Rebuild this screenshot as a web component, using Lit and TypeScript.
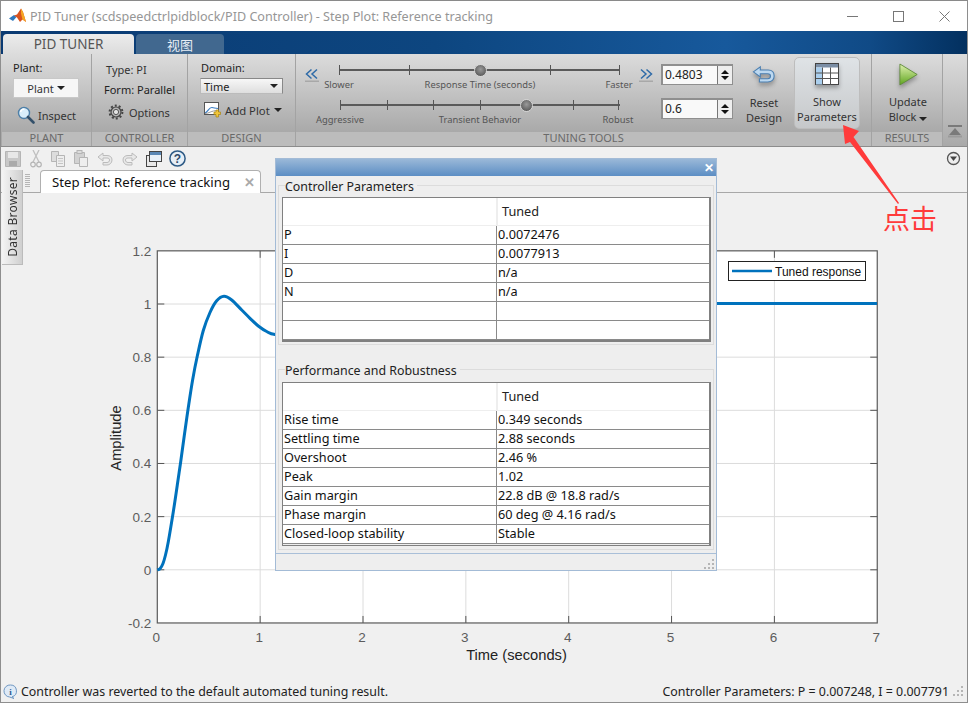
import { LitElement, html, css, svg } from "lit";
import { customElement } from "lit/decorators.js";

const curvePts: [number, number][] = [
  [157.3, 570], [160, 568.8], [163, 563.5], [165.5, 555], [168.3, 541.7], [173.3, 511.7], [177.3, 485], [180.7, 461.7],
  [184.3, 435.5], [188.3, 407.5], [192.7, 379.5], [197.3, 356], [203.3, 330.5], [210, 312.5],
  [216.7, 300.8], [224, 296.2], [231.7, 300], [241.7, 310], [250, 318.3], [258.3, 326],
  [266.7, 331.5], [275, 334.5], [300, 336], [400, 318], [500, 308], [600, 304.5], [700, 303.5], [877, 303.5],
];

function smooth(p: [number, number][]) {
  let d = `M${p[0][0]} ${p[0][1]}`;
  for (let i = 0; i < p.length - 1; i++) {
    const a = p[Math.max(0, i - 1)], b = p[i], c = p[i + 1], e = p[Math.min(p.length - 1, i + 2)];
    const c1 = [b[0] + (c[0] - a[0]) / 6, b[1] + (c[1] - a[1]) / 6];
    const c2 = [c[0] - (e[0] - b[0]) / 6, c[1] - (e[1] - b[1]) / 6];
    d += `C${c1[0].toFixed(1)} ${c1[1].toFixed(1)} ${c2[0].toFixed(1)} ${c2[1].toFixed(1)} ${c[0]} ${c[1]}`;
  }
  return d;
}

const X0 = 157.3, XU = 102.85, YZ = 569.8, YU = 265.8;
const xs = [0, 1, 2, 3, 4, 5, 6, 7];
const ys = [-0.2, 0, 0.2, 0.4, 0.6, 0.8, 1, 1.2];
const px = (t: number) => X0 + t * XU;
const py = (v: number) => YZ - v * YU;

function plot() {
  const L = px(0), R = px(7), T = py(1.2), B = py(-0.2);
  return html`<svg class="plot" viewBox="1 193 966 487" width="966" height="487">
    <rect x=${L} y=${T} width=${R - L} height=${B - T} fill="#fff"></rect>
    ${xs.slice(1, 7).map((t) => svg`<line x1=${px(t)} x2=${px(t)} y1=${T} y2=${B} stroke="#dcdcdc"></line>
      <line x1=${px(t)} x2=${px(t)} y1=${T} y2=${T + 7} stroke="#555"></line>
      <line x1=${px(t)} x2=${px(t)} y1=${B} y2=${B - 7} stroke="#555"></line>`)}
    ${ys.slice(1, 7).map((v) => svg`<line x1=${L} x2=${R} y1=${py(v)} y2=${py(v)} stroke="#dcdcdc"></line>
      <line x1=${L} x2=${L + 7} y1=${py(v)} y2=${py(v)} stroke="#555"></line>
      <line x1=${R} x2=${R - 7} y1=${py(v)} y2=${py(v)} stroke="#555"></line>`)}
    <rect x=${L} y=${T} width=${R - L} height=${B - T} fill="none" stroke="#5a5a5a" stroke-width="1.2"></rect>
    <path d=${smooth(curvePts)} fill="none" stroke="#0072bd" stroke-width="3"></path>
    ${ys.map((v) => svg`<text class="tick" x=${L - 6} y=${py(v) + 5} text-anchor="end">${v === 0 || v === 1 ? v : v.toFixed(1)}</text>`)}
    ${xs.map((t) => svg`<text class="tick" x=${px(t) - 1} y="642" text-anchor="middle">${t}</text>`)}
    <text class="axis" x="516.5" y="660" text-anchor="middle">Time (seconds)</text>
    <text class="axis" transform="translate(121 438) rotate(-90)" text-anchor="middle">Amplitude</text>
    <rect x="728.5" y="261.5" width="137" height="19" fill="#fff" stroke="#222"></rect>
    <line x1="732" x2="772" y1="271" y2="271" stroke="#0072bd" stroke-width="2.5"></line>
    <text class="legend" x="775" y="276">Tuned response</text>
  </svg>`;
}

const ico = {
  logo: html`<svg width="17" height="17" viewBox="0 0 17 17"><path d="M0 10.500L5 7l2.500 2L4 13z" fill="#2f78bd"></path><path d="M5 7.500L8 6.500 12 .5 14 4l3 10-3.500-2.500L11 14 8 9.500z" fill="#d9531e"></path><path d="M12 .5L14 4l3 10-3.500-2.500-1.500-6z" fill="#f5a623"></path></svg>`,
  inspect: html`<svg width="18" height="18" viewBox="0 0 18 18"><circle cx="7" cy="7" r="5.5" fill="#d9eefb" stroke="#4d7fa8" stroke-width="1.4"></circle><path d="M3.5 6a4 4 0 0 1 4-3" stroke="#fff" stroke-width="1.4" fill="none"></path><path d="M11 11l5.5 5.5" stroke="#33506a" stroke-width="2.6" stroke-linecap="round"></path></svg>`,
  gear: html`<svg width="16" height="16" viewBox="0 0 16 16"><circle cx="8" cy="8" r="5" fill="#b5b5b5" stroke="#444" stroke-width="1.2"></circle><circle cx="8" cy="8" r="6.4" fill="none" stroke="#444" stroke-width="2" stroke-dasharray="2 2.02"></circle><circle cx="8" cy="8" r="2.6" fill="#e4e4e4" stroke="#555"></circle></svg>`,
  addplot: html`<svg width="17" height="16" viewBox="0 0 17 16"><rect x=".5" y=".5" width="14" height="12" fill="#fff" stroke="#555"></rect><path d="M1 11C4 10 5 5 8 5.500s3 1 6 1" stroke="#3d7fc4" stroke-width="1.2" fill="none"></path><path d="M1 11.500c4 0 6-3 13-3" stroke="#999" fill="none"></path><path d="M10 10h2V8h2.500v2h2v2.500h-2V15H12v-2.500h-2z" fill="#f2c63a" stroke="#a88415" stroke-width=".7"></path></svg>`,
  back: html`<svg width="24" height="24" viewBox="0 0 26 24"><path d="M1.500 7.500L9 2v3.500h8.500c4 0 6.500 2.500 6.500 6.500s-3 6.500-7 6.500H8v-3.500h9c2 0 3-1.300 3-3s-1-2.500-3-2.500H9V13z" fill="#bcd8f0" stroke="#4a7eb0" stroke-width="1.200"></path></svg>`,
  table: html`<svg width="24" height="26" viewBox="0 0 24 26"><rect x=".5" y=".5" width="23" height="21" fill="#fff" stroke="#444"></rect><rect x="1" y="1" width="22" height="3.500" fill="#7b8ea5"></rect><rect x="1" y="4.500" width="6.500" height="17" fill="#aacfee"></rect><path d="M7.500 4.500v17M15.500 4.500v17M1 10h22M1 15.500h22" stroke="#555" fill="none"></path></svg>`,
  play: html`<svg width="20" height="23" viewBox="0 0 22 25"><defs><linearGradient id="pg" x1="0" y1="0" x2="0" y2="1"><stop offset="0" stop-color="#e0f2b0"></stop><stop offset="1" stop-color="#5fa51f"></stop></linearGradient></defs><path d="M1 1l19 11.500L1 24z" fill="url(#pg)" stroke="#5f8a3a"></path></svg>`,
  save: html`<svg width="16" height="16" viewBox="0 0 16 16"><path d="M.5.500h15v15H.5z" fill="#c8c8c8" stroke="#b5b5b5"></path><rect x="3" y="1" width="10" height="6" fill="#e8e8e8"></rect><rect x="4" y="10" width="8" height="5" fill="#aaa"></rect></svg>`,
  cut: html`<svg width="12" height="18" viewBox="0 0 12 18"><path d="M3 12L9 0M9 12L3 0" stroke="#c0c0c0" stroke-width="1.300"></path><circle cx="3" cy="14.500" r="2.300" fill="none" stroke="#b5b5b5" stroke-width="1.200"></circle><circle cx="9" cy="14.500" r="2.300" fill="none" stroke="#b5b5b5" stroke-width="1.200"></circle></svg>`,
  copy: html`<svg width="14" height="16" viewBox="0 0 14 16"><path d="M.5.500h7v10h-7z" fill="#ddd" stroke="#b5b5b5"></path><path d="M5.500 4.500h8v11h-8z" fill="#eee" stroke="#b5b5b5"></path><path d="M7 7.500h5M7 10h5M7 12.500h5" stroke="#c5c5c5"></path></svg>`,
  paste: html`<svg width="14" height="17" viewBox="0 0 14 17"><path d="M.5 2.500h10v11H.5z" fill="#d2d2d2" stroke="#b5b5b5"></path><rect x="3" y=".5" width="5" height="3" fill="#ddd" stroke="#b5b5b5"></rect><path d="M5.500 7.500h8v9h-8z" fill="#eee" stroke="#b5b5b5"></path></svg>`,
  undo: html`<svg width="16" height="14" viewBox="0 0 16 14"><path d="M1 5l5-4v2.500h4c3 0 5 1.500 5 4.500s-2.500 5-5 5H6v-2.500h4c1.500 0 2.500-1 2.500-2.500S11.500 6 10 6H6v3z" fill="#e8e8e8" stroke="#bbb"></path></svg>`,
  redo: html`<svg width="16" height="14" viewBox="0 0 16 14"><path d="M15 5l-5-4v2.500H6C3 3.500 1 5 1 8s2.500 5 5 5h4v-2.500H6C4.500 10.500 3.500 9.500 3.500 8S4.500 6 6 6h4v3z" fill="#e8e8e8" stroke="#bbb"></path></svg>`,
  windows: html`<svg width="16" height="16" viewBox="0 0 16 16"><rect x=".5" y="4.500" width="10" height="11" fill="#e8e8e8" stroke="#444"></rect><rect x="3.500" y=".5" width="12" height="10" fill="#e8f0f8" stroke="#444"></rect><rect x="4" y="1" width="11" height="3" fill="#5a87b5"></rect></svg>`,
  help: html`<svg width="17" height="17" viewBox="0 0 17 17"><circle cx="8.500" cy="8.500" r="7.600" fill="#e6eef6" stroke="#2d5a85" stroke-width="1.500"></circle><text x="8.500" y="13" text-anchor="middle" font-family="Liberation Sans" font-weight="700" font-size="12" fill="#2d4a6a">?</text></svg>`,
  menu: html`<svg width="15" height="15" viewBox="0 0 15 15"><circle cx="7.500" cy="7.500" r="6" fill="#eee" stroke="#555" stroke-width="1.300"></circle><path d="M4 5.500h7L7.500 10z" fill="#444"></path></svg>`,
  info: html`<svg width="15" height="15" viewBox="0 0 15 15"><path d="M7.500 1a6 6 0 0 1 1.500 11.800L11 14.500 6.500 13A6 6 0 0 1 7.500 1z" fill="#dfeaf6" stroke="#6f97c2"></path><text x="7.500" y="10.500" text-anchor="middle" font-family="Liberation Serif" font-weight="700" font-size="9" fill="#2c5a90">i</text></svg>`,
  grip: html`<svg width="12" height="12" viewBox="0 0 12 12" fill="#b5b5b5"><rect x="9" y="1" width="2" height="2"></rect><rect x="5" y="5" width="2" height="2"></rect><rect x="9" y="5" width="2" height="2"></rect><rect x="1" y="9" width="2" height="2"></rect><rect x="5" y="9" width="2" height="2"></rect><rect x="9" y="9" width="2" height="2"></rect></svg>`,
  collapse: html`<svg width="14" height="13" viewBox="0 0 14 13"><rect x="0" y="0" width="14" height="2" fill="#7a7a7a"></rect><path d="M7 3l6 7H1z" fill="#7a7a7a"></path><rect x="0" y="10.500" width="14" height="2" fill="#9a9a9a"></rect></svg>`,
};

const chevL = html`<svg class="chev" width="14" height="14" viewBox="0 0 14 14"><path d="M6.500 1.500L1.500 6l5 4.500M12 1.500L7 6l5 4.500" fill="none" stroke="#2f6ba8" stroke-width="1.500"></path><rect x="0" y="12.500" width="14" height="1.500" fill="#a8a8a8"></rect></svg>`;
const chevR = html`<svg class="chev" width="14" height="14" viewBox="0 0 14 14"><path d="M2 1.500L7 6l-5 4.500M7.500 1.500l5 4.500-5 4.500" fill="none" stroke="#2f6ba8" stroke-width="1.500"></path><rect x="0" y="12.500" width="14" height="1.500" fill="#a8a8a8"></rect></svg>`;

interface SliderSpec {
  left: number;
  ticks: number[];
  thumb: number;
  labels: [string, number][];
}
const sliders: SliderSpec[] = [
  { left: 339, ticks: [0, 70, 211, 280], thumb: 141, labels: [["Slower", 0], ["Response Time (seconds)", 141], ["Faster", 280]] },
  { left: 340, ticks: [0, 47, 93, 140, 233, 278], thumb: 186, labels: [["Aggressive", 0], ["Transient Behavior", 140], ["Robust", 278]] },
];

const ctrlRows = [["P", "0.0072476"], ["I", "0.0077913"], ["D", "n/a"], ["N", "n/a"], ["", ""], ["", ""]];
const perfRows = [
  ["Rise time", "0.349 seconds"], ["Settling time", "2.88 seconds"], ["Overshoot", "2.46 %"], ["Peak", "1.02"],
  ["Gain margin", "22.8 dB @ 18.8 rad/s"], ["Phase margin", "60 deg @ 4.16 rad/s"], ["Closed-loop stability", "Stable"],
];

@customElement("app-root")
export class AppRoot extends LitElement {
  static styles = css`
    :host { display: block; width: 968px; height: 703px; position: relative; overflow: hidden;
      font-family: "Noto Sans", "Noto Sans CJK SC", sans-serif; font-size: 12px; color: #222; }
    * { box-sizing: border-box; }
    .win { width: 968px; height: 703px; display: flex; flex-direction: column; background: #f0f0f0;
      border: 1px solid #8e8e8e; border-top-color: #8a8a8a; }
    .title { height: 30px; flex: none; background: #fff; display: flex; align-items: center; padding-left: 8px; gap: 4px;
      color: #969696; font-size: 12.6px; }
    .wbtns { margin-left: auto; display: flex; color: #777; }
    .wbtns svg { display: block; }
    .wbtn { width: 46px; height: 30px; display: flex; align-items: center; justify-content: center; }
    .strip { height: 23px; flex: none; display: flex; align-items: flex-end; padding-left: 2px; gap: 2px;
      background: linear-gradient(90deg, #0a3a72 0%, #0d4680 45%, #17599c 75%, #104a86 90%, #03305f 100%); }
    .tab { height: 20px; border-radius: 4px 4px 0 0; display: flex; align-items: center; justify-content: center; font-size: 13.5px; }
    .tab.on { width: 131px; background: linear-gradient(#ececec, #dcdcdc); color: #555; }
    .tab.off { width: 88px; background: #41688f; color: #e8eef5; font-size: 13px; }
    .ribbon { height: 93px; flex: none; display: flex; border-bottom: 1px solid #8c8c8c;
      background: linear-gradient(#dcdcdc, #a9a9a9 85%); padding-left: 1px; font-size: 11px; }
    .grp { display: flex; flex-direction: column; flex: none; border-right: 1px solid #a3a3a3; }
    .gbody { height: 78px; flex: none; display: flex; flex-direction: column; }
    .gfoot { height: 14px; flex: none; background: #bcbcbc; color: #6a6a6a; text-align: center; line-height: 12px; font-size: 11px; }
    .g1 { width: 90px; } .g2 { width: 96px; } .g3 { width: 108px; } .g4 { width: 576px; } .g5 { width: 71px; }
    .g1 .gbody { padding: 6px 0 0 11px; }
    .dd { width: 66px; height: 20px; margin-top: 3px; background: #f6f6f6; border: 1px solid #c8c8c8; display: flex; align-items: center; justify-content: center; gap: 3px; color: #333; }
    .caret { width: 0; height: 0; border: 4px solid transparent; border-top: 4px solid #222; border-bottom: 0; display: inline-block; }
    .ins { display: flex; align-items: center; gap: 3px; margin: 8px 0 0 4px; color: #333; }
    .g2 .gbody { padding: 8px 0 0 12px; gap: 4px; }
    .g2 .ty { padding-left: 2px; height: 16px; line-height: 16px; color: #333; }
    .opt { display: flex; align-items: center; gap: 5px; margin: 3px 0 0 4px; color: #333; }
    .g3 .gbody { padding: 6px 0 0 12px; }
    .dom { margin-left: 1px; }
    .sel { width: 83px; height: 16px; margin-top: 3px; background: linear-gradient(#f7f7f7, #dedede); border: 1px solid #bbb; border-right-color: #888; border-top-color: #888; display: flex; align-items: center; justify-content: space-between; padding: 0 4px 0 3px; color: #222; }
    .add { display: flex; align-items: center; gap: 4px; margin: 8px 0 0 4px; color: #333; font-size: 11.3px; }
    .g4 .gbody { flex-direction: row; position: relative; }
    .chevL { width: 43px; flex: none; padding: 14px 0 0 9px; }
    .sliders { width: 288px; flex: none; display: flex; flex-direction: column; padding-top: 7px; }
    .sl { position: relative; height: 35px; }
    .track { position: absolute; left: 0; top: 8px; height: 2px; background: #5a5a5a; width: 280px; }
    .t { position: absolute; top: 4px; width: 1px; height: 10px; background: #555; }
    .th { position: absolute; top: 3px; width: 13px; height: 13px; border-radius: 50%; margin-left: -6px;
      background: radial-gradient(circle at 50% 40%, #9a9a9a, #555 85%); border: 1px solid #d5d5d5; }
    .lab { position: absolute; top: 17px; transform: translateX(-50%); white-space: nowrap; color: #555; font-size: 9.4px; line-height: 13px; }
    .chevR { width: 34px; flex: none; padding: 14px 0 0 12px; }
    .spins { width: 72px; flex: none; display: flex; flex-direction: column; gap: 13px; padding-top: 10px; }
    .spin { height: 21px; display: flex; border: 1px solid #8f8f8f; border-width: 2px 1px 1px 2px; background: #f9f9f9; }
    .spin .v { flex: 1; padding-left: 2px; color: #222; line-height: 17px; font-size: 12px; }
    .spin .ar { width: 15px; border-left: 1px solid #777; background: #eee; display: flex; flex-direction: column; align-items: center; justify-content: center; gap: 2px; }
    .up { width: 0; height: 0; border: 4px solid transparent; border-bottom: 4px solid #111; border-top: 0; }
    .dn { width: 0; height: 0; border: 4px solid transparent; border-top: 4px solid #111; border-bottom: 0; }
    .big { display: flex; flex-direction: column; align-items: center; text-align: center; line-height: 15px; color: #333; flex: none; }
    .big svg { filter: drop-shadow(0 3px 2px rgba(0, 0, 0, .3)); }
    .reset { width: 61px; padding: 10px 0 0 1px; }
    .reset svg { margin-bottom: 7px; }
    .show { width: 66px; height: 72px; margin-top: 3px; border: 1px solid #bdbdbd; border-radius: 5px; background: linear-gradient(#dfe3e6, #c6c8ca); padding-top: 5px; }
    .show svg { margin-bottom: 5px; }
    .upd { width: 71px; padding: 9px 0 0 1px; }
    .upd svg { margin: 0 0 8px 2px; }
    .cl { flex: 1; display: flex; align-items: flex-end; justify-content: center; padding-bottom: 8px; background: linear-gradient(#dcdcdc, #a9a9a9 100%); }
    .tb { height: 23px; flex: none; display: flex; align-items: center; padding: 0 6px 0 4px; gap: 9px; }
    .tb svg { display: block; }
    .tb .m { margin-left: auto; }
    .tb .ws { margin-left: -1px; display: flex; gap: 7px; align-items: center; }
    .work { flex: 1; min-height: 0; display: flex; flex-direction: column; position: relative; }
    .tabs { height: 23px; flex: none; display: flex; align-items: flex-end; border-bottom: 1px solid #a8a8a8; padding-left: 39px; }
    .st { width: 221px; height: 23px; background: #fff; border: 1px solid #b0b0b0; border-bottom: 0; border-radius: 4px 4px 0 0; display: flex; align-items: center; padding-left: 11px; color: #111; font-size: 13.2px; margin-bottom: -1px; }
    .st .x { margin-left: auto; margin-right: 5px; color: #aaa; font-size: 13px; font-weight: 700; }
    .grip2 { position: absolute; left: 24px; top: 4px; width: 5px; height: 14px; background: repeating-linear-gradient(#b5b5b5 0 1px, transparent 1px 2px); }
    .db { position: absolute; left: 1px; top: 0; width: 21px; height: 95px; background: linear-gradient(90deg, #f4f4f4, #cfcfcf); border-right: 1px solid #bbb; border-bottom: 1px solid #bbb; z-index: 1;
      display: flex; align-items: center; justify-content: center; }
    .db span { writing-mode: vertical-rl; transform: rotate(180deg); color: #333; letter-spacing: .3px; }
    .plot { display: block; flex: 1; }
    .tick { font-family: "Liberation Sans", sans-serif; font-size: 13.5px; fill: #5c5c5c; }
    .axis { font-family: "Liberation Sans", sans-serif; font-size: 14.7px; fill: #222; }
    .legend { font-family: "Liberation Sans", sans-serif; font-size: 12px; fill: #111; }
    .status { height: 22px; flex: none; display: flex; align-items: center; padding: 0 3px 0 2px; gap: 3px; color: #222; font-size: 12.4px; }
    .status .r { margin-left: auto; }
    .dlg { position: absolute; left: 275px; top: 158px; width: 442px; height: 413px; background: #eee; border: 1px solid #a3bbd6; display: flex; flex-direction: column; padding-top: 0; z-index: 3; }
    .dbar { height: 17px; flex: none; background: linear-gradient(#9ab8d8, #5c8ec4); display: flex; align-items: center; justify-content: flex-end; padding-right: 2px; color: #fff; font-size: 12px; font-weight: 700; }
    .fr { margin: 8px 2px 0 2px; border: 1px solid #dcdcdc; padding: 0 3px 0 3px; flex: none; }
    .fr.a { height: 160px; margin-top: 9px; }
    .fr.b { height: 181px; margin-top: 24px; }
    .lg { margin-top: -7px; margin-left: 3px; height: 18px; line-height: 15px; padding: 0 3px 0 0; background: #eee; width: fit-content; color: #222; font-size: 12.4px; }
    .fr.b .lg { height: 19px; line-height: 16px; }
    .tbl { border: 1px solid #808080; border-right-width: 2px; background: #fff; font-size: 12.7px; margin-right: -1px; }
    .fr.a .tbl { height: 145px; border-bottom-width: 2px; }
    .fr.b .tbl { height: 164px; background: #eee; }
    .row { display: grid; grid-template-columns: 213px 1fr; }
    .hd { height: 28px; border-bottom: 1px solid #eee; background: #fff; }
    .hd div:last-child { border-left: 2px solid #eee; padding-left: 4px; line-height: 27px; }
    .bd { height: 19px; border-bottom: 1px solid #8a8a8a; background: #fff; line-height: 16px; color: #111; }
    .bd div { padding-left: 1px; overflow: hidden; white-space: nowrap; }
    .bd div:last-child { border-left: 1px solid #8a8a8a; padding-left: 1px; }
    .dfoot { margin-top: auto; height: 17px; flex: none; border-top: 1px solid #a9bfd8; display: flex; justify-content: flex-end; align-items: flex-end; padding-right: 1px; }
    .arrow { position: absolute; left: 830px; top: 115px; z-index: 4; }
    .click { position: absolute; left: 883px; top: 201px; z-index: 4; color: #ff3b3b; font-size: 27px; line-height: 34px; font-family: "Noto Sans CJK SC", sans-serif; }
  `;

  private table(rows: string[][]) {
    return html`<div class="tbl">
      <div class="row hd"><div></div><div>Tuned</div></div>
      ${rows.map((r) => html`<div class="row bd"><div>${r[0]}</div><div>${r[1]}</div></div>`)}
    </div>`;
  }

  render() {
    return html`<div class="win">
      <div class="title">${ico.logo}<span>PID Tuner (scdspeedctrlpidblock/PID Controller) - Step Plot: Reference tracking</span>
        <div class="wbtns">
          <div class="wbtn"><svg width="11" height="11" viewBox="0 0 11 11"><path d="M0 5.500h11" stroke="#777"></path></svg></div>
          <div class="wbtn"><svg width="11" height="11" viewBox="0 0 11 11"><rect x=".5" y=".5" width="10" height="10" fill="none" stroke="#777"></rect></svg></div>
          <div class="wbtn"><svg width="11" height="11" viewBox="0 0 11 11"><path d="M.5.500l10 10M10.500.500l-10 10" stroke="#777"></path></svg></div>
        </div>
      </div>
      <div class="strip"><div class="tab on">PID TUNER</div><div class="tab off">视图</div></div>
      <div class="ribbon">
        <div class="grp g1"><div class="gbody"><div>Plant:</div><div class="dd">Plant <span class="caret"></span></div><div class="ins">${ico.inspect}<span>Inspect</span></div></div><div class="gfoot">PLANT</div></div>
        <div class="grp g2"><div class="gbody"><div class="ty">Type: PI</div><div>Form: Parallel</div><div class="opt">${ico.gear}<span>Options</span></div></div><div class="gfoot">CONTROLLER</div></div>
        <div class="grp g3"><div class="gbody"><div class="dom">Domain:</div><div class="sel"><span>Time</span><span class="caret"></span></div><div class="add">${ico.addplot}<span>Add Plot</span><span class="caret"></span></div></div><div class="gfoot">DESIGN</div></div>
        <div class="grp g4"><div class="gbody">
          <div class="chevL">${chevL}</div>
          <div class="sliders">${sliders.map((s) => html`<div class="sl" style="margin-left:${s.left - 339}px">
            <div class="track"></div>
            ${s.ticks.map((t) => html`<div class="t" style="left:${t}px"></div>`)}
            <div class="th" style="left:${s.thumb}px"></div>
            ${s.labels.map((l) => html`<div class="lab" style="left:${l[1]}px">${l[0]}</div>`)}
          </div>`)}</div>
          <div class="chevR">${chevR}</div>
          <div class="spins">
            <div class="spin"><div class="v">0.4803</div><div class="ar"><div class="up"></div><div class="dn"></div></div></div>
            <div class="spin"><div class="v">0.6</div><div class="ar"><div class="up"></div><div class="dn"></div></div></div>
          </div>
          <div class="big reset">${ico.back}<span>Reset<br />Design</span></div>
          <div class="big show">${ico.table}<span>Show<br />Parameters</span></div>
        </div><div class="gfoot">TUNING TOOLS</div></div>
        <div class="grp g5"><div class="gbody"><div class="big upd">${ico.play}<span>Update<br />Block <span class="caret"></span></span></div></div><div class="gfoot">RESULTS</div></div>
        <div class="cl">${ico.collapse}</div>
      </div>
      <div class="tb">${ico.save}${ico.cut}${ico.copy}${ico.paste}${ico.undo}${ico.redo}<div class="ws">${ico.windows}${ico.help}</div><div class="m">${ico.menu}</div></div>
      <div class="work">
        <div class="db"><span>Data Browser</span></div>
        <div class="grip2"></div>
        <div class="tabs"><div class="st">Step Plot: Reference tracking<span class="x">✕</span></div></div>
        ${plot()}
      </div>
      <div class="status">${ico.info}<span>Controller was reverted to the default automated tuning result.</span>
        <span class="r">Controller Parameters: P = 0.007248, I = 0.007791</span>${ico.grip}</div>
    </div>
    <div class="dlg">
      <div class="dbar">✕</div>
      <div class="fr a"><div class="lg">Controller Parameters</div>${this.table(ctrlRows)}</div>
      <div class="fr b"><div class="lg">Performance and Robustness</div>${this.table(perfRows)}</div>
      <div class="dfoot">${ico.grip}</div>
    </div>
    <svg class="arrow" width="72" height="92" viewBox="830 115 72 92">
      <path d="M843 125L859 131 853.500 137 899 203 898 204 850 142 845 144z" fill="#ff3b3b"></path>
    </svg>
    <div class="click">点击</div>`;
  }
}
